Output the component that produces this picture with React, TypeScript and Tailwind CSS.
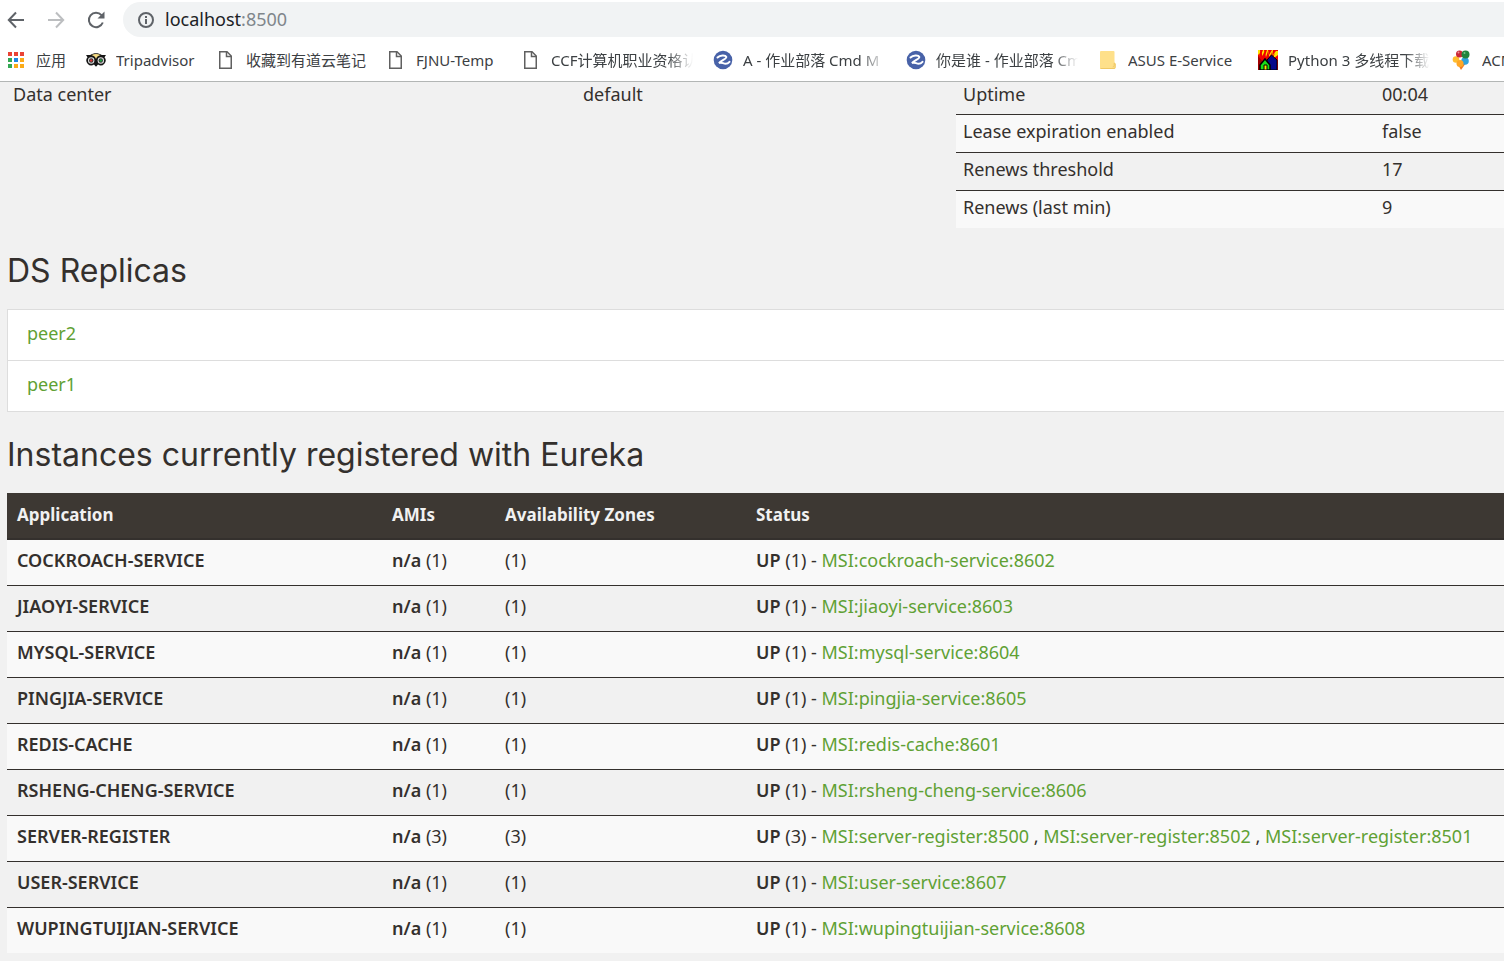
import type { ReactNode } from 'react';

const sans = "font-['Noto_Sans','Noto_Sans_CJK_SC',sans-serif]";

function AppsIcon() {
  const colors = ['#ea4335', '#ea4335', '#ea4335', '#34a853', '#1e88e5', '#fbab18', '#34a853', '#fbab18', '#fbab18'];
  return (
    <svg width="20" height="20" viewBox="0 0 20 20" aria-hidden="true">
      {colors.map((c, i) => (
        <rect key={i} x={2 + (i % 3) * 6} y={2 + Math.floor(i / 3) * 6} width="4" height="4" fill={c} />
      ))}
    </svg>
  );
}

function OwlIcon() {
  return (
    <svg width="20" height="20" viewBox="0 0 20 20" aria-hidden="true">
      <path d="M0 5h4.2C7.6 2.8 12.4 2.8 15.8 5H20l-1.500 2.200A5 5 0 0 1 12 14.600L10 16.700l-2-2.100A5 5 0 0 1 1.500 7.200Z" fill="#151515" />
      <path d="M5.500 4.900c3-1.300 6-1.300 9 0C12 5.600 10.500 7 10 9 9.500 7 8 5.600 5.500 4.900Z" fill="#f7dc84" />
      <circle cx="5.200" cy="10.500" r="3.200" fill="#e4e4e4" />
      <circle cx="14.800" cy="10.500" r="3.200" fill="#e4e4e4" />
      <circle cx="5.200" cy="10.500" r="2.200" fill="#333" />
      <circle cx="14.800" cy="10.500" r="2.200" fill="#333" />
      <circle cx="5.200" cy="10.500" r="1.300" fill="#d83a3a" />
      <circle cx="14.800" cy="10.500" r="1.300" fill="#25a045" />
    </svg>
  );
}

function PageIcon() {
  return (
    <svg width="20" height="20" viewBox="0 0 20 20" fill="none" stroke="#606060" strokeWidth="1.500" aria-hidden="true">
      <path d="M3.750 1.750H11l4.250 4.250v12.250H3.750Z" />
      <path d="M10.500 2v4.500H15" />
    </svg>
  );
}

function CmdIcon() {
  return (
    <svg width="20" height="20" viewBox="0 0 20 20" aria-hidden="true">
      <circle cx="10" cy="10" r="9.300" fill="#4862a8" />
      <path d="M4.500 7.500C7 5 12.500 4.800 13.300 6.900 14 9 8 10.500 6 13c2.500-1.300 4.200.8 6.500.8 1.800 0 3-.8 4-2" fill="none" stroke="#fff" strokeWidth="2" strokeLinecap="round" />
    </svg>
  );
}

function FolderIcon() {
  return (
    <svg width="20" height="20" viewBox="0 0 20 20" aria-hidden="true">
      <path d="M3 1h12.500q1 0 1 1v10.500l1 .8v4.200q0 1.500-1.500 1.500H3q-1 0-1-1V2q0-1 1-1Z" fill="#fee08a" />
      <path d="M2.500 18.500H16q1.200 0 1.200-1.200v-3.500l-1-.7v2.400q0 1.500-1.500 1.500" fill="none" stroke="#efc865" />
    </svg>
  );
}

function HousesIcon() {
  return (
    <svg width="20" height="20" viewBox="0 0 20 20" aria-hidden="true">
      <path d="M0 0h20v20H0Z" fill="#f00000" />
      <path d="M0 0h2l1 5 2-5h1l1 6 2-6h1l1 5 3-5h1l-1 6 4-5h2v4l-4 3H4L0 4Z" fill="#ffe500" />
      <path d="m3 0 1.500 6L6.500 1 8 7l2-6 1.500 6L14 2l-.5 5L17 3l-3 7H4L1 5Z" fill="#f00000" />
      <path d="M0 6 5 12 2 20H0Z" fill="#a00000" />
      <path d="m9 10 4.500-5L19 10v10H9Z" fill="#07078a" stroke="#000" />
      <path d="M2 20v-5l5-6 5 6v5Z" fill="#18df18" stroke="#000" strokeWidth="1.500" />
      <path d="M6 20v-5h3v5Z" fill="#ffe500" stroke="#000" />
    </svg>
  );
}

function BalloonsIcon() {
  return (
    <svg width="20" height="20" viewBox="0 0 20 20" aria-hidden="true">
      <path d="m5 13 4 7 5-7Z" fill="#f47b20" />
      <circle cx="4" cy="9.500" r="3.300" fill="#ffbd2e" />
      <circle cx="13" cy="11" r="3.800" fill="#31a3dc" />
      <circle cx="7.500" cy="4" r="3.500" fill="#ca2837" />
      <circle cx="13.500" cy="4.500" r="4" fill="#21843d" />
      <circle cx="8" cy="13.500" r="3.500" fill="#ffa726" />
      <circle cx="6.500" cy="2.500" r="1" fill="#ee9299" />
      <circle cx="12.500" cy="3" r="1" fill="#79c386" />
    </svg>
  );
}

const fade = '[mask-image:linear-gradient(to_right,black_82%,transparent)]';

const bookmarks: { label: string; icon: ReactNode; width: string; fades?: boolean }[] = [
  { label: '应用', icon: <AppsIcon />, width: 'w-20' },
  { label: 'Tripadvisor', icon: <OwlIcon />, width: 'w-[130px]' },
  { label: '收藏到有道云笔记', icon: <PageIcon />, width: 'w-[170px]' },
  { label: 'FJNU-Temp', icon: <PageIcon />, width: 'w-[135px]' },
  { label: 'CCF计算机职业资格认证', icon: <PageIcon />, width: 'w-48', fades: true },
  { label: 'A - 作业部落 Cmd M', icon: <CmdIcon />, width: 'w-[193px]', fades: true },
  { label: '你是谁 - 作业部落 Cmd', icon: <CmdIcon />, width: 'w-48', fades: true },
  { label: 'ASUS E-Service', icon: <FolderIcon />, width: 'w-40' },
  { label: 'Python 3 多线程下载', icon: <HousesIcon />, width: 'w-[194px]', fades: true },
  { label: 'ACM', icon: <BalloonsIcon />, width: 'w-40' },
];

function BrowserBar() {
  return (
    <header className="border-b border-[#b3b6b5] bg-white">
      <div className="flex h-[39px] items-center">
        <div className="flex w-[123px] shrink-0 items-center gap-5 pl-[6px]">
          <button type="button" aria-label="Back" className="size-5 text-[#5f6368]">
            <svg viewBox="0 0 20 20" fill="none" stroke="currentColor" strokeWidth="2" aria-hidden="true">
              <path d="M18 10H3M10 2.500 2.800 10l7.200 7.500" />
            </svg>
          </button>
          <button type="button" aria-label="Forward" disabled className="size-5 text-[#bcbec0]">
            <svg viewBox="0 0 20 20" fill="none" stroke="currentColor" strokeWidth="2" aria-hidden="true">
              <path d="M2 10h15M10 2.500l7.200 7.500-7.200 7.500" />
            </svg>
          </button>
          <button type="button" aria-label="Reload" className="size-5 text-[#5f6368]">
            <svg viewBox="0 0 20 20" aria-hidden="true">
              <path d="M16.800 12.500A7.200 7.200 0 1 1 15.500 5.200L17 7" fill="none" stroke="currentColor" strokeWidth="2" />
              <path d="M18.500 1.500v7h-7Z" fill="currentColor" />
            </svg>
          </button>
        </div>
        <div className="flex h-[35px] grow items-center gap-2.5 rounded-l-full bg-[#f1f3f4] pl-[14px]">
          <svg width="18" height="18" viewBox="0 0 18 18" fill="none" stroke="#5f6368" strokeWidth="2" aria-hidden="true">
            <circle cx="9" cy="9" r="7" />
            <path d="M9 8v5M9 5v2" />
          </svg>
          <div className="pb-0.5 text-lg leading-6 text-[#202124]">
            localhost<span className="text-[#80868b]">:8500</span>
          </div>
        </div>
      </div>
      <nav aria-label="Bookmarks" className="flex h-[42px] items-center overflow-hidden pl-[6px]">
        {bookmarks.map((b) => (
          <a key={b.label} href="#" className={`flex shrink-0 items-center gap-2.5 text-[15px] leading-6 text-[#3c4043] ${b.width}`}>
            <span className="shrink-0">{b.icon}</span>
            <span className={`w-[142px] overflow-hidden whitespace-nowrap ${b.fades ? fade : ''}`}>{b.label}</span>
          </a>
        ))}
      </nav>
    </header>
  );
}

const stats = [
  ['Uptime', '00:04'],
  ['Lease expiration enabled', 'false'],
  ['Renews threshold', '17'],
  ['Renews (last min)', '9'],
];

const services: { name: string; ports: number[] }[] = [
  { name: 'cockroach-service', ports: [8602] },
  { name: 'jiaoyi-service', ports: [8603] },
  { name: 'mysql-service', ports: [8604] },
  { name: 'pingjia-service', ports: [8605] },
  { name: 'redis-cache', ports: [8601] },
  { name: 'rsheng-cheng-service', ports: [8606] },
  { name: 'server-register', ports: [8500, 8502, 8501] },
  { name: 'user-service', ports: [8607] },
  { name: 'wupingtuijian-service', ports: [8608] },
];

const heading = "mt-[25px] mb-5 font-['Inter',sans-serif] text-[32px] leading-9 font-normal text-[#34302d]";
const headCell = 'pt-2.5 pb-[11px] pl-2.5 text-[17px]';
const cell = 'pt-2 pb-[13px] pl-2.5';

export default function App() {
  return (
    <div className={`min-h-screen overflow-hidden bg-[#f1f1f1] text-[#34302d] ${sans}`}>
      <BrowserBar />
      <main className="pl-[7px] text-lg leading-6">
        <section className="flex items-start">
          <table className="w-[949px] shrink-0 table-fixed">
            <tbody>
              <tr>
                <td className="w-[570px] pl-[6px]">Data center</td>
                <td className="pl-[6px]">default</td>
              </tr>
            </tbody>
          </table>
          <table className="grow table-fixed border-collapse">
            <tbody>
              {stats.map(([label, value], i) => (
                <tr key={label} className="border-t border-[#34302d] first:border-t-0 even:bg-[#f9f9f9]">
                  <td className={`w-[419px] pl-[7px] ${i === 0 ? 'pb-2' : 'pt-1 pb-[9px]'}`}>{label}</td>
                  <td className={`pl-[7px] ${i === 0 ? 'pb-2' : 'pt-1 pb-[9px]'}`}>{value}</td>
                </tr>
              ))}
            </tbody>
          </table>
        </section>

        <h1 className={heading}>DS Replicas</h1>
        <ul className="divide-y divide-[#ddd] border-y border-l border-[#ddd] bg-white">
          {['peer2', 'peer1'].map((peer) => (
            <li key={peer} className="pt-[11px] pb-[15px] pl-[19px]">
              <a href="#" className="text-[#5fa134]">{peer}</a>
            </li>
          ))}
        </ul>

        <h1 className={heading}>Instances currently registered with Eureka</h1>
        <table className="w-full table-fixed border-collapse text-left">
          <thead>
            <tr className="border-b-2 border-[#34302d] bg-[#3d3833] text-[#f1f1f1]">
              <th className={`w-[375px] ${headCell}`}>Application</th>
              <th className={`w-[113px] ${headCell}`}>AMIs</th>
              <th className={`w-[251px] ${headCell}`}>Availability Zones</th>
              <th className={headCell}>Status</th>
            </tr>
          </thead>
          <tbody>
            {services.map(({ name, ports }) => (
              <tr key={name} className="border-t border-[#34302d] odd:bg-[#f9f9f9]">
                <td className={`font-semibold uppercase ${cell}`}>{name}</td>
                <td className={cell}><b className="font-semibold">n/a</b> ({ports.length})</td>
                <td className={cell}>({ports.length})</td>
                <td className={`whitespace-nowrap ${cell}`}>
                  <b className="font-semibold">UP</b> ({ports.length}) -{' '}
                  {ports.map((port, i) => (
                    <span key={port}>
                      {i > 0 && ' , '}
                      <a href="#" className="text-[#5fa134]">{`MSI:${name}:${port}`}</a>
                    </span>
                  ))}
                </td>
              </tr>
            ))}
          </tbody>
        </table>
      </main>
    </div>
  );
}
